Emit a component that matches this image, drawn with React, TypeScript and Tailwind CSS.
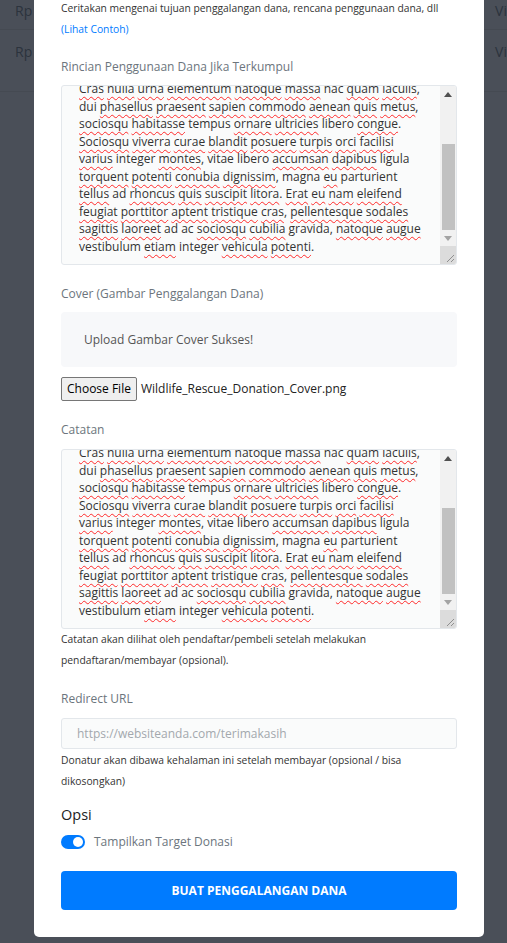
const fieldLines = [
  "~Cras~ ~nulla~ ~urna~ ~elementum~ ~natoque~ ~massa~ nac ~quam~ ~iaculis~,",
  "dui ~phasellus~ ~praesent~ ~sapien~ ~commodo~ ~aenean~ ~quis~ ~metus~,",
  "~sociosqu~ ~habitasse~ tempus ~ornare~ ~ultricies~ libero ~congue~.",
  "~Sociosqu~ ~viverra~ ~curae~ ~blandit~ ~posuere~ ~turpis~ ~orci~ ~facilisi~",
  "~varius~ integer ~montes~, vitae libero ~accumsan~ ~dapibus~ ligula",
  "~torquent~ ~potenti~ ~conubia~ ~dignissim~, magna ~eu~ parturient",
  "~tellus~ ad ~rhoncus~ ~quis~ ~suscipit~ ~litora~. ~Erat~ ~eu~ ~nam~ ~eleifend~",
  "~feugiat~ ~porttitor~ ~aptent~ ~tristique~ ~cras~, ~pellentesque~ ~sodales~",
  "~sagittis~ ~laoreet~ ad ac ~sociosqu~ ~cubilia~ gravida, ~natoque~ ~augue~",
  "vestibulum ~etiam~ integer ~vehicula~ ~potenti~.",
];

const Line = ({ text }: { text: string }) => {
  const parts = text.split("~");
  return (
    <div className="whitespace-nowrap">
      {parts.map((p, i) =>
        i % 2 === 1 ? (
          <span key={i} className="underline decoration-wavy decoration-[#ff2a2a] decoration-1 underline-offset-[3px]">
            {p}
          </span>
        ) : (
          <span key={i}>{p}</span>
        )
      )}
    </div>
  );
};

// textarea scrolled to the bottom, with a classic scrollbar
const LongField = () => (
  <div className="flex h-[180px] overflow-hidden rounded-[3px] border border-[#e3e7eb] bg-[#fafbfb]">
    <div className="flex flex-1 flex-col justify-end overflow-hidden pb-[9px] pl-[17px] font-['Open_Sans',sans-serif] text-[12px] leading-[17.5px] text-[#333]">
      {fieldLines.map((l, i) => (
        <Line key={i} text={l} />
      ))}
    </div>
    <div className="flex w-[16px] flex-col bg-[#f1f1f1]">
      <div className="flex h-[16px] items-center justify-center">
        <svg width="8" height="5" viewBox="0 0 8 5">
          <path d="M0 5 L4 0 L8 5 Z" fill="#505050" />
        </svg>
      </div>
      <div className="h-[42px]" />
      <div className="mx-[1px] ml-[2px] h-[86px] bg-[#c1c1c1]" />
      <div className="flex h-[16px] items-center justify-center">
        <svg width="8" height="5" viewBox="0 0 8 5">
          <path d="M0 0 L8 0 L4 5 Z" fill="#a3a3a3" />
        </svg>
      </div>
      <div className="relative flex-1 bg-[#dcdcdc]">
        <svg className="absolute bottom-[1px] right-[1px]" width="10" height="10" viewBox="0 0 10 10">
          <path d="M9 2 L2 9 M9 6 L6 9" stroke="#8f8f8f" strokeWidth="1" />
        </svg>
      </div>
    </div>
  </div>
);

const Label = ({ children }: { children: React.ReactNode }) => (
  <div className="text-[12px] leading-[20px] text-[#6c757d]">{children}</div>
);

const Help = ({ children, color = "text-[#333]", className = "" }: { children: React.ReactNode; color?: string; className?: string }) => (
  <p className={`text-[10.3px] leading-[21px] ${color} ${className}`}>{children}</p>
);

export default function App() {
  return (
    <div className="relative h-[943px] overflow-hidden bg-[#4a4f58] font-['Open_Sans',sans-serif]">
      <div className="text-[14px] text-[#2c333d]">
        <div className="flex h-[30px] items-start justify-between border-b border-[#454a52] pl-[15px]">
          <span>Rp 1</span>
          <span>Vi</span>
        </div>
        <div className="flex h-[62px] items-start justify-between border-b border-[#454a52] pl-[15px] pt-[11px]">
          <span>Rp 5</span>
          <span>Vi</span>
        </div>
      </div>

      <div className="absolute left-[34px] top-[-2px] w-[450px] rounded-b-[5px] bg-white px-[27px] pb-[27px]">
        <Help>Ceritakan mengenai tujuan penggalangan dana, rencana penggunaan dana, dll</Help>
        <Help color="text-[#007bff]">(Lihat Contoh)</Help>

        <div className="mb-[8px] mt-[17px]">
          <Label>Rincian Penggunaan Dana Jika Terkumpul</Label>
        </div>
        <LongField />

        <div className="mb-[8px] mt-[19px]">
          <Label>Cover (Gambar Penggalangan Dana)</Label>
        </div>
        <div className="flex h-[55px] items-center rounded-[4px] bg-[#f7f8fa] px-[23px] text-[12px] text-[#555]">
          Upload Gambar Cover Sukses!
        </div>
        <div className="mt-[10px] flex h-[24px] items-center gap-[4px] text-[12px] text-[#222]">
          <button className="h-[24px] rounded-[2px] border border-[#767676] bg-[#efefef] px-[5px] text-[12px] text-black">
            Choose File
          </button>
          <span>Wildlife_Rescue_Donation_Cover.png</span>
        </div>

        <div className="mb-[9px] mt-[19px]">
          <Label>Catatan</Label>
        </div>
        <LongField />
        <Help>Catatan akan dilihat oleh pendaftar/pembeli setelah melakukan pendaftaran/membayar (opsional).</Help>

        <div className="mb-[9px] mt-[18px]">
          <Label>Redirect URL</Label>
        </div>
        <input
          className="h-[31px] w-full rounded-[3px] border border-[#e3e7eb] bg-[#fafbfb] px-[15px] text-[12px] text-[#333] outline-none placeholder:text-[#a3a8ad]"
          placeholder="https://websiteanda.com/terimakasih"
        />
        <Help className="mt-[1px]">Donatur akan dibawa kehalaman ini setelah membayar (opsional / bisa dikosongkan)</Help>

        <div className="mt-[12px] text-[14.5px] leading-[22px] text-[#222]">Opsi</div>
        <div className="mt-[6px] flex h-[20px] items-center gap-[9px]">
          <div className="flex h-[14px] w-[24px] items-center justify-end rounded-full bg-[#007bff] pr-[2px]">
            <div className="h-[10px] w-[10px] rounded-full bg-white" />
          </div>
          <span className="text-[12px] text-[#6c757d]">Tampilkan Target Donasi</span>
        </div>

        <button className="mt-[19px] h-[39px] w-full rounded-[4px] bg-[#007bff] text-[12px] font-bold text-white">
          BUAT PENGGALANGAN DANA
        </button>
      </div>
    </div>
  );
}
